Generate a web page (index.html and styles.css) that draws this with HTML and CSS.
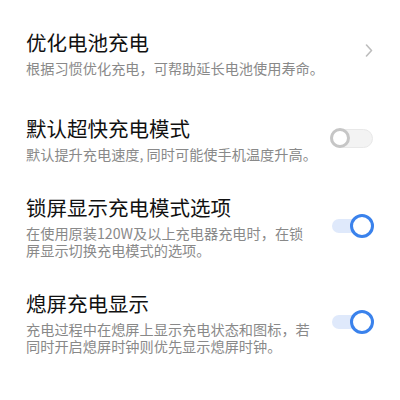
FILE: index.html
```html
<!DOCTYPE html>
<html lang="zh-CN">
<head>
<meta charset="utf-8">
<title>充电设置</title>
<link rel="stylesheet" href="styles.css">
</head>
<body>
<div class="list">
  <div class="row row-first">
    <div class="text">
      <div class="title">优化电池充电</div>
      <div class="sub nowrap">根据习惯优化充电，可帮助延长电池使用寿命。</div>
    </div>
    <svg class="chevron" width="8" height="13" viewBox="0 0 8 13"><polyline points="1.5,1 6.5,6.5 1.5,12" fill="none" stroke="#bdbdbd" stroke-width="1.6" stroke-linecap="round" stroke-linejoin="round"/></svg>
  </div>
  <div class="row">
    <div class="text">
      <div class="title">默认超快充电模式</div>
      <div class="sub nowrap">默认提升充电速度, 同时可能使手机温度升高。</div>
    </div>
    <div class="toggle off"><span class="track"></span><span class="knob"></span></div>
  </div>
  <div class="row">
    <div class="text">
      <div class="title">锁屏显示充电模式选项</div>
      <div class="sub">在使用原装120W及以上充电器充电时，在锁屏显示切换充电模式的选项。</div>
    </div>
    <div class="toggle on"><span class="track"></span><span class="knob"></span></div>
  </div>
  <div class="row">
    <div class="text">
      <div class="title">熄屏充电显示</div>
      <div class="sub">充电过程中在熄屏上显示充电状态和图标，若同时开启熄屏时钟则优先显示熄屏时钟。</div>
    </div>
    <div class="toggle on"><span class="track"></span><span class="knob"></span></div>
  </div>
</div>
</body>
</html>
```
FILE: styles.css
```css
html, body {
  margin: 0;
  padding: 0;
  background: #ffffff;
}
body {
  font-family: "Noto Sans CJK SC", "Noto Sans", sans-serif;
  width: 400px;
  height: 400px;
  overflow: hidden;
}
.list {
  padding: 12.5px 26px 0 26px;
  display: flex;
  flex-direction: column;
}
.row {
  display: flex;
  align-items: center;
  gap: 20px;
  padding: 15px 0;
}
.row-first {
  padding-bottom: 22px;
}
.text {
  flex: 1;
  min-width: 0;
  display: flex;
  flex-direction: column;
}
.title {
  font-size: 20.5px;
  line-height: 28px;
  font-weight: 400;
  color: #111111;
}
.sub {
  margin-top: 4px;
  font-size: 14.2px;
  line-height: 17px;
  color: #898989;
}
.nowrap {
  white-space: nowrap;
}
.chevron {
  flex: none;
  margin-right: 1px;
  margin-top: -4px;
}
.toggle {
  flex: none;
  position: relative;
  width: 44px;
  height: 24px;
}
.track, .knob {
  position: absolute;
  box-sizing: border-box;
  display: block;
}
.off .track {
  left: 0;
  top: 2.5px;
  width: 43px;
  height: 19px;
  border-radius: 10px;
  background: #f3f3f3;
  border: 1px solid #e8e8e8;
}
.off .knob {
  left: 0;
  top: 2px;
  width: 20px;
  height: 20px;
  border-radius: 50%;
  background: #ffffff;
  border: 3px solid #c6c6c6;
}
.on .track {
  left: 2px;
  top: 5px;
  width: 40px;
  height: 14px;
  border-radius: 7px;
  background: #dfe9fb;
}
.on .knob {
  right: 0;
  top: 0;
  width: 24px;
  height: 24px;
  border-radius: 50%;
  background: #ffffff;
  border: 3.5px solid #3a82ec;
}
```
